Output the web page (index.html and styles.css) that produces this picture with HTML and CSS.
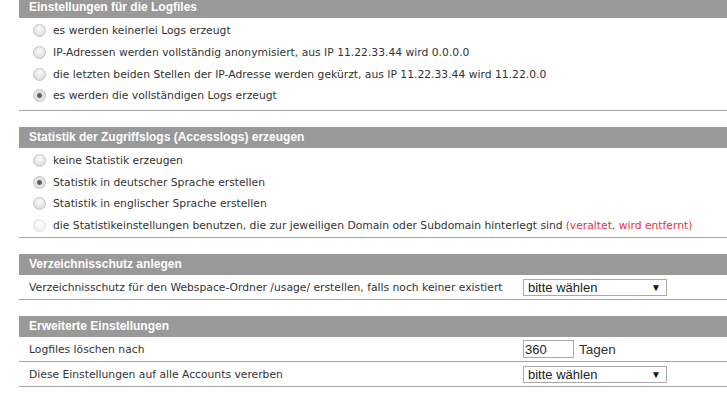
FILE: index.html
```html
<!DOCTYPE html>
<html lang="de">
<head>
    <meta charset="UTF-8">
    <title>Logfiles</title>
    <link rel="stylesheet" href="styles.css">
</head>
<body>
    <div class="content">
        <section class="block block-first">
            <h2 class="block-title">Einstellungen für die Logfiles</h2>
            <div class="options">
                <label class="option"><input type="radio" name="logs"> es werden keinerlei Logs erzeugt</label>
                <label class="option"><input type="radio" name="logs"> IP-Adressen werden vollständig anonymisiert, aus IP 11.22.33.44 wird 0.0.0.0</label>
                <label class="option"><input type="radio" name="logs"> die letzten beiden Stellen der IP-Adresse werden gekürzt, aus IP 11.22.33.44 wird 11.22.0.0</label>
                <label class="option"><input type="radio" name="logs" checked> es werden die vollständigen Logs erzeugt</label>
            </div>
        </section>

        <section class="block">
            <h2 class="block-title">Statistik der Zugriffslogs (Accesslogs) erzeugen</h2>
            <div class="options">
                <label class="option"><input type="radio" name="stats"> keine Statistik erzeugen</label>
                <label class="option"><input type="radio" name="stats" checked> Statistik in deutscher Sprache erstellen</label>
                <label class="option"><input type="radio" name="stats"> Statistik in englischer Sprache erstellen</label>
                <label class="option"><input type="radio" name="stats" disabled> die Statistikeinstellungen benutzen, die zur jeweiligen Domain oder Subdomain hinterlegt sind <span class="warning">(veraltet, wird entfernt)</span></label>
            </div>
        </section>

        <section class="block">
            <h2 class="block-title">Verzeichnisschutz anlegen</h2>
            <div class="row">
                <span class="row-label">Verzeichnisschutz für den Webspace-Ordner /usage/ erstellen, falls noch keiner existiert</span>
                <div class="row-field">
                    <div class="select"><span>bitte wählen</span><span class="arrow">&#9660;</span></div>
                </div>
            </div>
        </section>

        <section class="block">
            <h2 class="block-title">Erweiterte Einstellungen</h2>
            <div class="row">
                <span class="row-label">Logfiles löschen nach</span>
                <div class="row-field">
                    <input class="days" type="text" value="360">
                    <span class="unit">Tagen</span>
                </div>
            </div>
            <div class="row">
                <span class="row-label">Diese Einstellungen auf alle Accounts vererben</span>
                <div class="row-field">
                    <div class="select"><span>bitte wählen</span><span class="arrow">&#9660;</span></div>
                </div>
            </div>
        </section>
    </div>
</body>
</html>
```

FILE: styles.css
```css
* {
    margin: 0;
    padding: 0;
    box-sizing: border-box;
}
body {
    font-family: 'DejaVu Sans', Verdana, sans-serif;
    font-size: 10.75px;
    color: #333;
    background-color: #fff;
    overflow: hidden;
}
.content {
    padding-left: 19px;
}
.block {
    margin-bottom: 16px;
    border-bottom: 1px solid #a3a3a3;
}
.block-first {
    margin-top: -3px;
}
.block-first .options {
    padding-bottom: 3px;
}
.block-title {
    background-color: #999;
    color: #fff;
    font-family: 'Liberation Sans', Arial, sans-serif;
    font-size: 12px;
    font-weight: bold;
    height: 21px;
    line-height: 21px;
    padding-left: 10px;
}
.options {
    padding: 2px 0 0.5px 14px;
}
.option {
    display: flex;
    align-items: center;
    height: 21.7px;
    white-space: nowrap;
}
.option input {
    appearance: none;
    -webkit-appearance: none;
    width: 13px;
    height: 13px;
    border-radius: 50%;
    border: 1px solid #c4c4c4;
    background: radial-gradient(circle at 50% 35%, #fbfbfb 0%, #e6e6e6 55%, #d2d2d2 100%);
    margin-right: 7px;
    flex-shrink: 0;
}
.option input:checked {
    background: radial-gradient(circle, #555 0, #666 2px, #e4e4e4 3px, #dcdcdc 100%);
}
.option input:disabled {
    border-color: #e2e2e2;
    background: radial-gradient(circle at 50% 35%, #fff 0%, #f2f2f2 60%, #ececec 100%);
}
.warning {
    color: #e5323a;
    margin-left: 3px;
}
.row {
    display: grid;
    grid-template-columns: 504px 1fr;
    align-items: center;
    height: 24px;
}
.row + .row {
    border-top: 1px solid #a3a3a3;
    height: 25px;
}
.row-label {
    padding-left: 10px;
    white-space: nowrap;
}
.row-field {
    display: flex;
    align-items: center;
    gap: 5px;
    font-family: 'Liberation Sans', Arial, sans-serif;
}
.select {
    width: 144px;
    height: 17px;
    border: 1px solid #a9a9a9;
    display: flex;
    align-items: center;
    justify-content: space-between;
    padding: 0 5px 0 4px;
    font-size: 13px;
    color: #222;
}
.select .arrow {
    font-size: 10px;
    color: #111;
}
.days {
    width: 51px;
    height: 18px;
    border: 1px solid #a9a9a9;
    font-family: 'Liberation Sans', Arial, sans-serif;
    font-size: 13px;
    color: #222;
    padding: 0 1px;
    outline: none;
}
.unit {
    font-size: 13.5px;
    color: #333;
}
```
